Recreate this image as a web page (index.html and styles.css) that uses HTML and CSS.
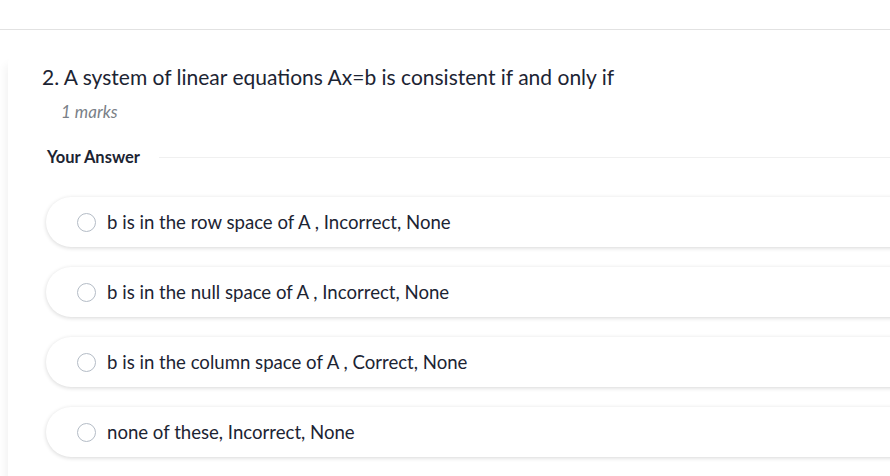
FILE: index.html
```html
<!DOCTYPE html>
<html>
<head>
<meta charset="utf-8">
<link rel="stylesheet" href="styles.css">
</head>
<body>
<div class="topbar"></div>
<div class="card">
  <div class="question">2. A system of linear equations Ax=b is consistent if and only if</div>
  <div class="marks">1 marks</div>
  <div class="answer-head"><span>Your Answer</span><div class="rule"></div></div>
  <div class="options">
    <label class="option"><span class="radio"></span><span class="otext">b is in the row space of A , Incorrect, None</span></label>
    <label class="option"><span class="radio"></span><span class="otext">b is in the null space of A , Incorrect, None</span></label>
    <label class="option"><span class="radio"></span><span class="otext">b is in the column space of A , Correct, None</span></label>
    <label class="option"><span class="radio"></span><span class="otext">none of these, Incorrect, None</span></label>
  </div>
</div>
</body>
</html>
```

FILE: styles.css
```css
html, body {
  margin: 0;
  padding: 0;
  background: #ffffff;
  overflow: hidden;
  height: 476px;
}
body {
  font-family: Lato, "Noto Sans", sans-serif;
  color: #1c2433;
}
.topbar {
  height: 29px;
  border-bottom: 1px solid #e2e2e2;
}
.card {
  margin: 27px -80px 0 8px;
  padding: 6px 0 40px 34px;
  background: #fff;
  box-shadow: -3px 7px 8px rgba(0, 0, 0, 0.05);
  border-radius: 6px;
}
.question {
  font-size: 21px;
  line-height: 28px;
}
.marks {
  margin: 11px 0 0 19px;
  font-size: 17px;
  font-style: italic;
  color: #7a7f87;
  line-height: 20px;
}
.answer-head {
  display: flex;
  align-items: center;
  margin: 25px 0 0 5px;
  font-size: 16.5px;
  font-weight: 700;
  line-height: 20px;
}
.answer-head .rule {
  flex: 1;
  height: 1px;
  background: #f0f0f0;
  margin-left: 19px;
}
.options {
  margin: 30px 0 0 4px;
  display: flex;
  flex-direction: column;
  gap: 20px;
}
.option {
  display: flex;
  align-items: center;
  height: 50px;
  border-radius: 26px;
  background: #fff;
  box-shadow: 0 1px 4px rgba(0, 0, 0, 0.16);
  padding-left: 31px;
}
.radio {
  width: 19px;
  height: 19px;
  border: 1px solid #b4bcc6;
  border-radius: 50%;
  box-sizing: border-box;
  flex: none;
}
.otext {
  margin-left: 11px;
  font-size: 18.6px;
  color: #1c2433;
}
```
